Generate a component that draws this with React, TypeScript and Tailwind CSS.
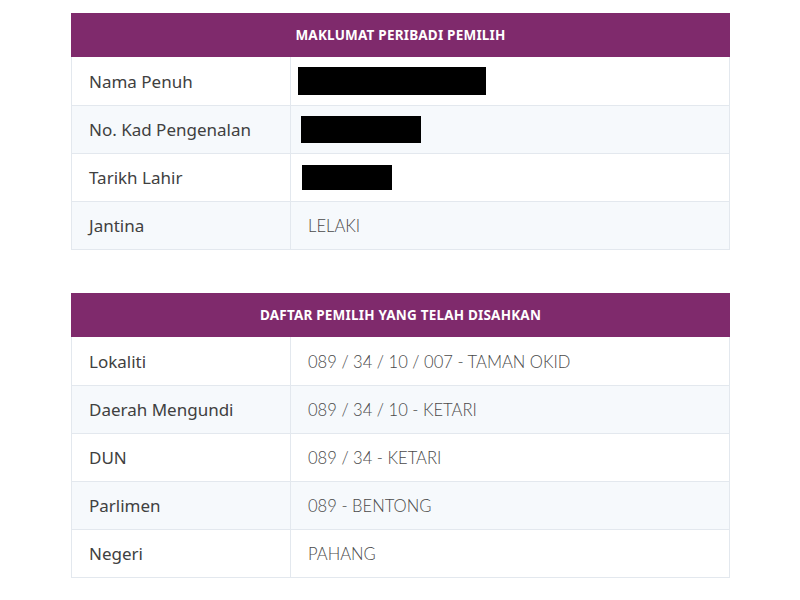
import React from "react";

type Row = { label: string; value?: string; redact?: { w: number; h: number; ml: number } };

function Table({ title, rows }: { title: string; rows: Row[] }) {
  return (
    <div className="w-[659px] border-x border-b border-[#e3e8ee]">
      <div className="h-[44px] -mx-px bg-[#7f2a6c] flex items-center justify-center text-white text-[13.5px] font-bold tracking-[0.2px] font-['Noto_Sans',sans-serif]">
        {title}
      </div>
      {rows.map((r, i) => (
        <div
          key={r.label}
          className={`flex h-[48px] ${i > 0 ? "border-t border-[#e3e8ee]" : ""} ${i % 2 === 1 ? "bg-[#f6f9fc]" : "bg-white"}`}
        >
          <div className="w-[219px] border-r border-[#e3e8ee] flex items-center pl-[17px] pt-[1px] text-[17px] text-[#404040] font-['Noto_Sans',sans-serif]">
            {r.label}
          </div>
          <div className="flex-1 flex items-center pl-[17px] pt-[2px] text-[16.6px] font-light text-[#4a4a4a] font-['Lato',sans-serif]">
            {r.redact ? (
              <div
                className="bg-black"
                style={{ width: r.redact.w, height: r.redact.h, marginLeft: r.redact.ml, marginTop: -2 }}
              />
            ) : (
              r.value
            )}
          </div>
        </div>
      ))}
    </div>
  );
}

export default function App() {
  return (
    <div className="w-[800px] h-[600px] bg-white flex flex-col items-start pl-[71px] pt-[13px] gap-[43px]">
      <Table
        title="MAKLUMAT PERIBADI PEMILIH"
        rows={[
          { label: "Nama Penuh", redact: { w: 188, h: 28, ml: -10 } },
          { label: "No. Kad Pengenalan", redact: { w: 120, h: 27, ml: -7 } },
          { label: "Tarikh Lahir", redact: { w: 90, h: 25, ml: -6 } },
          { label: "Jantina", value: "LELAKI" },
        ]}
      />
      <Table
        title="DAFTAR PEMILIH YANG TELAH DISAHKAN"
        rows={[
          { label: "Lokaliti", value: "089 / 34 / 10 / 007 - TAMAN OKID" },
          { label: "Daerah Mengundi", value: "089 / 34 / 10 - KETARI" },
          { label: "DUN", value: "089 / 34 - KETARI" },
          { label: "Parlimen", value: "089 - BENTONG" },
          { label: "Negeri", value: "PAHANG" },
        ]}
      />
    </div>
  );
}
